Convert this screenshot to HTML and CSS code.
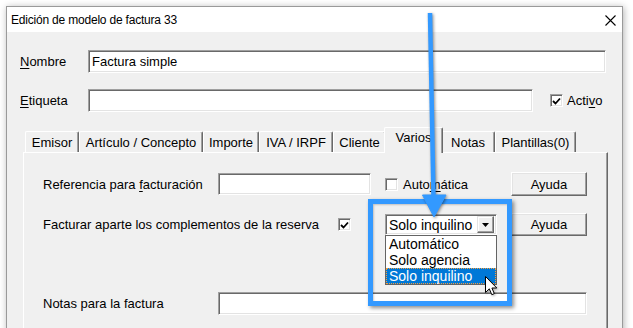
FILE: index.html
```html
<!DOCTYPE html>
<html lang="es">
<head>
  <meta charset="UTF-8">
  <title>Edición de modelo de factura 33</title>
  <link rel="stylesheet" href="styles.css">
</head>
<body>
  <div class="window">
    <div class="titlebar">
      <span class="title">Edición de modelo de factura 33</span>
      <svg class="close" width="11" height="11" viewBox="0 0 11 11"><path d="M0.5 0.5 L10.5 10.5 M10.5 0.5 L0.5 10.5" stroke="#000" stroke-width="1.1"/></svg>
    </div>

    <div class="client">
      <div class="row row-name">
        <label class="lbl"><u>N</u>ombre</label>
        <div class="field field-name">Factura simple</div>
      </div>

      <div class="row row-tag">
        <label class="lbl"><u>E</u>tiqueta</label>
        <div class="field field-tag"></div>
        <span class="check active-check">
          <svg width="9" height="9" viewBox="0 0 9 9"><path d="M1 4 L3.5 6.5 L8 1.5" fill="none" stroke="#000" stroke-width="1.8"/></svg>
        </span>
        <span class="check-text">Acti<u>v</u>o</span>
      </div>

      <div class="tabs">
        <div class="tab t-emisor">Emisor</div>
        <div class="tab t-articulo">Artículo / Concepto</div>
        <div class="tab t-importe">Importe</div>
        <div class="tab t-iva">IVA / IRPF</div>
        <div class="tab t-cliente">Cliente</div>
        <div class="tab t-varios selected">Varios</div>
        <div class="tab t-notas">Notas</div>
        <div class="tab t-plantillas">Plantillas(0)</div>
      </div>

      <div class="panel">
        <div class="form-grid">
          <label class="lbl">Referencia para <u>f</u>acturación</label>
          <div class="field field-ref"></div>
          <div class="check-cell">
            <span class="check"></span>
            <span class="check-text">Auto<u>m</u>ática</span>
          </div>
          <button class="btn">Ayuda</button>

          <div class="wide-cell">
            <label class="lbl lbl-wide">Facturar aparte los complementos de la reserva</label>
            <span class="check">
              <svg width="9" height="9" viewBox="0 0 9 9"><path d="M1 4 L3.5 6.5 L8 1.5" fill="none" stroke="#000" stroke-width="1.8"/></svg>
            </span>
          </div>
          <div class="combo-cell">
            <div class="combo">
              <span class="combo-value">Solo inquilino</span>
              <span class="combo-btn">
                <svg width="7" height="4" viewBox="0 0 7 4"><path d="M0 0 H7 L3.5 4 Z" fill="#000"/></svg>
              </span>
            </div>
            <ul class="combo-list">
              <li>Automático</li>
              <li>Solo agencia</li>
              <li class="picked">Solo inquilino</li>
            </ul>
          </div>
          <button class="btn btn-b">Ayuda</button>
        </div>

        <div class="notes-row">
          <label class="lbl lbl-notes">Notas para la factura</label>
          <div class="field field-notes"></div>
        </div>
      </div>
    </div>
  </div>

  <!-- annotation drawn over the screenshot -->
  <div class="callout"></div>
  <svg class="arrow" width="633" height="328" viewBox="0 0 633 328">
    <g fill="#3399ff" stroke="#3399ff">
      <path d="M430 13 L433.5 198" stroke-width="4.5" fill="none"/>
      <path d="M422.5 195 L446 195 L434 217 Z" stroke-width="1"/>
    </g>
  </svg>
  <svg class="cursor" width="13" height="20" viewBox="0 0 13 20">
    <path d="M0.5 0.5 V16.5 L4.3 12.8 L6.8 18.7 L9.3 17.6 L6.9 12 H11.8 Z" fill="#fff" stroke="#000" stroke-width="1" stroke-linejoin="miter"/>
  </svg>
</body>
</html>
```

FILE: styles.css
```css
html, body {
  margin: 0;
  padding: 0;
}

body {
  width: 633px;
  height: 328px;
  overflow: hidden;
  background-color: #ffffff;
  font-family: "Liberation Sans", Arial, sans-serif;
  font-size: 13px;
  color: #000;
  position: relative;
}

.window {
  margin: 6px 0 0 6px;
  width: 615px;
  height: 330px;
  border: 1px solid #9a9a9a;
  box-shadow: 1px 1px 7px rgba(0, 0, 0, 0.3);
  background-color: #f0f0f0;
  overflow: hidden;
}

.titlebar {
  height: 25px;
  background-color: #ffffff;
  display: flex;
  align-items: center;
  justify-content: space-between;
  padding: 0 6px 0 4px;
}

.title {
  font-size: 12px;
  letter-spacing: -0.2px;
  padding-top: 1px;
}

.close {
  margin-top: 2px;
}

.client {
  padding: 18px 0 0 13px;
}

.row {
  display: flex;
  align-items: center;
  height: 23px;
}

.row-tag {
  margin-top: 16px;
}

.lbl {
  display: inline-block;
}

.row .lbl {
  width: 68px;
}

u {
  text-decoration: underline;
  text-underline-offset: 2px;
}

.field {
  box-sizing: border-box;
  height: 23px;
  background-color: #ffffff;
  border: 1px solid;
  border-color: #a0a0a0 #ffffff #ffffff #a0a0a0;
  box-shadow: inset 1px 1px 0 #696969, inset -1px -1px 0 #e3e3e3;
  padding: 3px 3px 0 3px;
  line-height: 16px;
}

.field-name {
  width: 518px;
}

.field-tag {
  width: 445px;
}

.check {
  box-sizing: border-box;
  width: 13px;
  height: 13px;
  background-color: #ffffff;
  border: 1px solid;
  border-color: #a0a0a0 #ffffff #ffffff #a0a0a0;
  box-shadow: inset 1px 1px 0 #696969, inset -1px -1px 0 #e3e3e3;
  display: inline-flex;
  align-items: center;
  justify-content: center;
  flex-shrink: 0;
}

.check svg {
  margin: 1px 0 0 0;
}

.active-check {
  margin-left: 17px;
}

.check-text {
  margin-left: 4px;
}

/* tab strip */
.tabs {
  display: flex;
  align-items: flex-end;
  height: 25px;
  margin: 15px 0 0 5px;
  position: relative;
  z-index: 2;
}

.tab {
  box-sizing: border-box;
  height: 21px;
  border-top: 1px solid #ffffff;
  border-left: 1px solid #ffffff;
  border-right: 1px solid #696969;
  box-shadow: inset -1px 0 0 #a0a0a0;
  border-radius: 2px 2px 0 0;
  text-align: center;
  line-height: 19px;
  padding-top: 1px;
  white-space: nowrap;
}

.t-emisor { width: 54px; }
.t-articulo { width: 124px; }
.t-importe { width: 56px; }
.t-iva { width: 74px; }
.t-cliente { width: 53px; }
.t-notas { width: 54px; }
.t-plantillas { width: 81px; }

.tab.selected {
  width: 59px;
  height: 26px;
  margin: 0 -2px -1px -2px;
  background-color: #f0f0f0;
  line-height: 17px;
  position: relative;
  z-index: 3;
}

.panel {
  box-sizing: border-box;
  margin-left: 3px;
  width: 585px;
  height: 200px;
  border-top: 1px solid #ffffff;
  border-left: 1px solid #ffffff;
  border-right: 1px solid #696969;
  box-shadow: inset -1px 0 0 #a0a0a0;
  padding: 19px 0 0 19px;
}

.form-grid {
  display: grid;
  grid-template-columns: 175px 167px 126px 76px;
  grid-template-rows: 24px 23px;
  row-gap: 17px;
  align-items: center;
}

.field-ref {
  width: 153px;
  height: 22px;
}

.check-cell {
  display: flex;
  align-items: center;
  padding-top: 1px;
}

.check-cell .check-text {
  margin-left: 5px;
}

.btn {
  box-sizing: border-box;
  width: 76px;
  height: 24px;
  font-family: inherit;
  font-size: 13px;
  background-color: #f0f0f0;
  border: 1px solid;
  border-color: #ffffff #696969 #696969 #ffffff;
  box-shadow: inset -1px -1px 0 #a0a0a0, inset 1px 1px 0 #e3e3e3;
  padding: 0;
  color: #000;
}

.btn-b {
  height: 23px;
}

.wide-cell {
  grid-column: 1 / 3;
  display: flex;
  align-items: center;
}

.lbl-wide {
  width: 295px;
}

.combo-cell {
  position: relative;
  height: 21px;
}

.combo {
  box-sizing: border-box;
  width: 112px;
  height: 21px;
  background-color: #ffffff;
  border: 1px solid;
  border-color: #a0a0a0 #ffffff #ffffff #a0a0a0;
  box-shadow: inset 1px 1px 0 #696969, inset -1px -1px 0 #e3e3e3;
  display: flex;
  align-items: center;
  justify-content: space-between;
  padding: 2px 2px 2px 3px;
  font-size: 14px;
}

.combo-btn {
  box-sizing: border-box;
  width: 17px;
  height: 17px;
  background-color: #f0f0f0;
  border: 1px solid;
  border-color: #e3e3e3 #696969 #696969 #e3e3e3;
  box-shadow: inset -1px -1px 0 #a0a0a0, inset 1px 1px 0 #ffffff;
  display: flex;
  align-items: center;
  justify-content: center;
}

.combo-list {
  position: absolute;
  top: 21px;
  left: 0;
  box-sizing: border-box;
  width: 112px;
  margin: 0;
  padding: 0;
  list-style: none;
  background-color: #ffffff;
  border: 1px solid #646464;
  z-index: 4;
  font-size: 14px;
}

.combo-list li {
  box-sizing: border-box;
  height: 16px;
  line-height: 15px;
  padding-left: 2px;
  border: 1px solid transparent;
}

.combo-list li.picked {
  background-color: #0078d7;
  color: #ffffff;
  border: 1px dotted #f5a040;
}

.notes-row {
  display: flex;
  align-items: center;
  height: 23px;
  margin-top: 56px;
}

.lbl-notes {
  width: 175px;
}

.field-notes {
  width: 369px;
}

/* annotation */
.callout {
  position: absolute;
  left: 368px;
  top: 199px;
  width: 134px;
  height: 97px;
  border: 5px solid #3399ff;
  box-shadow: 2px 2px 4px rgba(0, 0, 0, 0.45), inset 1px 1px 2px rgba(0, 0, 0, 0.2);
  z-index: 5;
}

.arrow {
  position: absolute;
  left: 0;
  top: 0;
  z-index: 6;
  filter: drop-shadow(1px 1px 1.5px rgba(0, 0, 0, 0.45));
}

.cursor {
  position: absolute;
  left: 485px;
  top: 276px;
  z-index: 7;
  filter: drop-shadow(1px 1px 1px rgba(0, 0, 0, 0.3));
}
```
